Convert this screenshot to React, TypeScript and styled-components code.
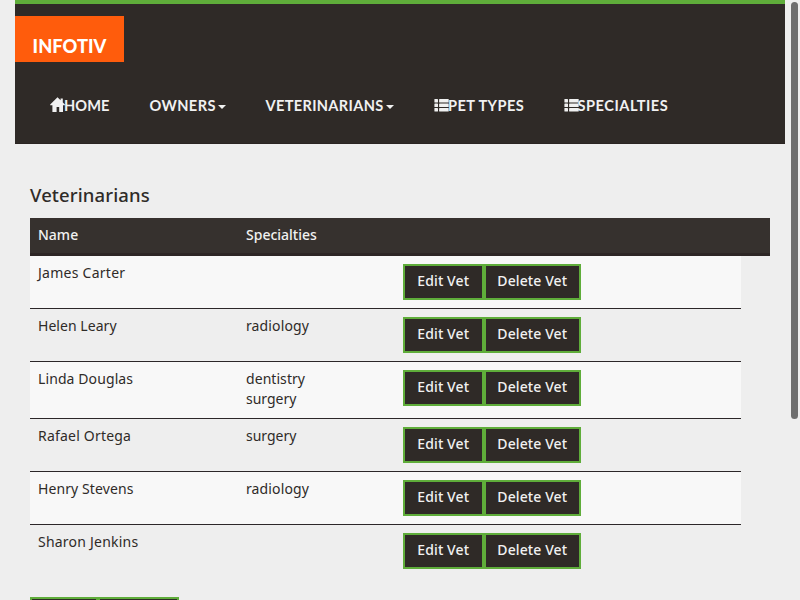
import React from "react";
import styled, { createGlobalStyle } from "styled-components";

const GlobalStyle = createGlobalStyle`
  * { box-sizing: border-box; }
  body {
    margin: 0;
    height: 600px;
    overflow: hidden;
    background: #eeeeee;
    color: #2f2b28;
    font: 400 14px/20px "Noto Sans", sans-serif;
  }
`;

const Page = styled.div`
  height: 600px;
  padding: 0 15px;
  overflow: hidden;
`;

const Navbar = styled.header`
  height: 144px;
  padding-top: 12px;
  border-top: 4px solid #5fad3a;
  border-bottom: 1px solid #2a2422;
  background: #2f2a27;
`;

const Logo = styled.div`
  display: flex;
  justify-content: center;
  width: 109px;
  height: 46px;
  padding-top: 18px;
  background: #ff5c0c;
  color: #fff;
  font: 900 18.3px/24px Lato, sans-serif;
`;

const Menu = styled.nav`
  display: flex;
  gap: 39.5px;
  padding: 33px 0 0 35px;
`;

const MenuItem = styled.a<{ $width: number; $tracking?: number }>`
  display: flex;
  align-items: center;
  width: ${(p) => p.$width}px;
  color: #f1f1f1;
  font: 700 14.6px/22px Lato, sans-serif;
  letter-spacing: ${(p) => p.$tracking ?? 0}px;
  white-space: nowrap;
`;

const MenuIcon = styled.svg`
  flex: none;
  width: 15px;
  height: 15px;
  margin: -3px -1px 0 0;
  fill: #f1f1f1;
`;

const Caret = styled.span`
  margin: 2px 0 0 2.5px;
  border: 4px solid transparent;
  border-top-color: #f1f1f1;
  border-bottom: 0;
`;

const Content = styled.main`
  padding: 39px 15px 0;
`;

const Title = styled.h2`
  margin: 0 0 11px;
  font: 500 18.5px/24px "Noto Sans", sans-serif;
  letter-spacing: 0.12px;
`;

const COLUMNS = "208px 157px 1fr";

const TableHead = styled.div`
  display: grid;
  grid-template-columns: ${COLUMNS};
  height: 38px;
  border-bottom: 3px solid #2d2625;
  background: #36312e;
  color: #f1f1f1;
  font-weight: 500;
`;

const TableRow = styled.div`
  display: grid;
  grid-template-columns: ${COLUMNS};
  width: 711px;

  & + & { border-top: 1px solid #2c2729; }
  &:nth-child(odd) { background: #f8f8f8; }
`;

const Cell = styled.div<{ $tracking?: number }>`
  padding: 7px 8px 9px;
  letter-spacing: ${(p) => p.$tracking ?? 0}px;
`;

const Specialty = styled.div<{ $tracking: number }>`
  letter-spacing: ${(p) => p.$tracking}px;
`;

const Actions = styled.div`
  display: flex;
  padding: 8px;
`;

const Button = styled.button<{ $width: number }>`
  width: ${(p) => p.$width}px;
  height: 36px;
  padding: 0 0.5px 3px 0;
  border: 2px solid #5fad3a;
  background: #2f2a27;
  color: #f1f1f1;
  font: 500 14px/20px "Noto Sans", sans-serif;
  letter-spacing: 0.1px;
  white-space: nowrap;
`;

const Footer = styled.div`
  display: flex;
  margin-top: 20px;
`;

const ScrollThumb = styled.div`
  position: absolute;
  top: 2px;
  left: 791px;
  width: 7px;
  height: 417px;
  border-radius: 4px;
  background: #6e6e6e;
`;

const HomeIcon = () => (
  <MenuIcon viewBox="0 0 15 15">
    <path d="M7.5 0.2 L14.9 7.6 V8.2 H13 V14.9 H9.2 V10 H6.6 V14.9 H2.4 V8.2 H0.2 V7.6 Z M10.6 1.6 H12.8 V6 L10.6 4 Z" />
  </MenuIcon>
);

const ListIcon = () => (
  <MenuIcon viewBox="0 0 15 15">
    {[2, 6.5, 11].map((y) => (
      <React.Fragment key={y}>
        <rect x="0.4" y={y} width="3.6" height="3.5" rx="0.6" />
        <rect x="5.1" y={y} width="9.6" height="3.5" rx="0.6" />
      </React.Fragment>
    ))}
  </MenuIcon>
);

interface Vet {
  name: string;
  tracking: number;
  specialties: { label: string; tracking: number }[];
}

const radiology = { label: "radiology", tracking: 0.12 };
const dentistry = { label: "dentistry", tracking: 0.06 };
const surgery = { label: "surgery", tracking: 0 };

const vets: Vet[] = [
  { name: "James Carter", tracking: 0.26, specialties: [] },
  { name: "Helen Leary", tracking: 0.05, specialties: [radiology] },
  { name: "Linda Douglas", tracking: 0.1, specialties: [dentistry, surgery] },
  { name: "Rafael Ortega", tracking: 0.2, specialties: [surgery] },
  { name: "Henry Stevens", tracking: 0.1, specialties: [radiology] },
  { name: "Sharon Jenkins", tracking: 0.22, specialties: [] },
];

export default function App() {
  return (
    <>
      <GlobalStyle />
      <Page>
        <Navbar>
          <Logo>INFOTIV</Logo>
          <Menu>
            <MenuItem $width={60} $tracking={0.05}><HomeIcon />HOME</MenuItem>
            <MenuItem $width={76.5} $tracking={0.4}>OWNERS<Caret /></MenuItem>
            <MenuItem $width={129} $tracking={0.32}>VETERINARIANS<Caret /></MenuItem>
            <MenuItem $width={90} $tracking={0.4}><ListIcon />PET TYPES</MenuItem>
            <MenuItem $width={105} $tracking={0.52}><ListIcon />SPECIALTIES</MenuItem>
          </Menu>
        </Navbar>
        <Content>
          <Title>Veterinarians</Title>
          <TableHead>
            <Cell>Name</Cell>
            <Cell>Specialties</Cell>
          </TableHead>
          <div>
            {vets.map((vet) => (
              <TableRow key={vet.name}>
                <Cell $tracking={vet.tracking}>{vet.name}</Cell>
                <Cell>
                  {vet.specialties.map((s) => (
                    <Specialty key={s.label} $tracking={s.tracking}>{s.label}</Specialty>
                  ))}
                </Cell>
                <Actions>
                  <Button $width={81}>Edit Vet</Button>
                  <Button $width={97}>Delete Vet</Button>
                </Actions>
              </TableRow>
            ))}
          </div>
          <Footer>
            <Button $width={68} />
            <Button $width={81} />
          </Footer>
        </Content>
      </Page>
      <ScrollThumb />
    </>
  );
}
